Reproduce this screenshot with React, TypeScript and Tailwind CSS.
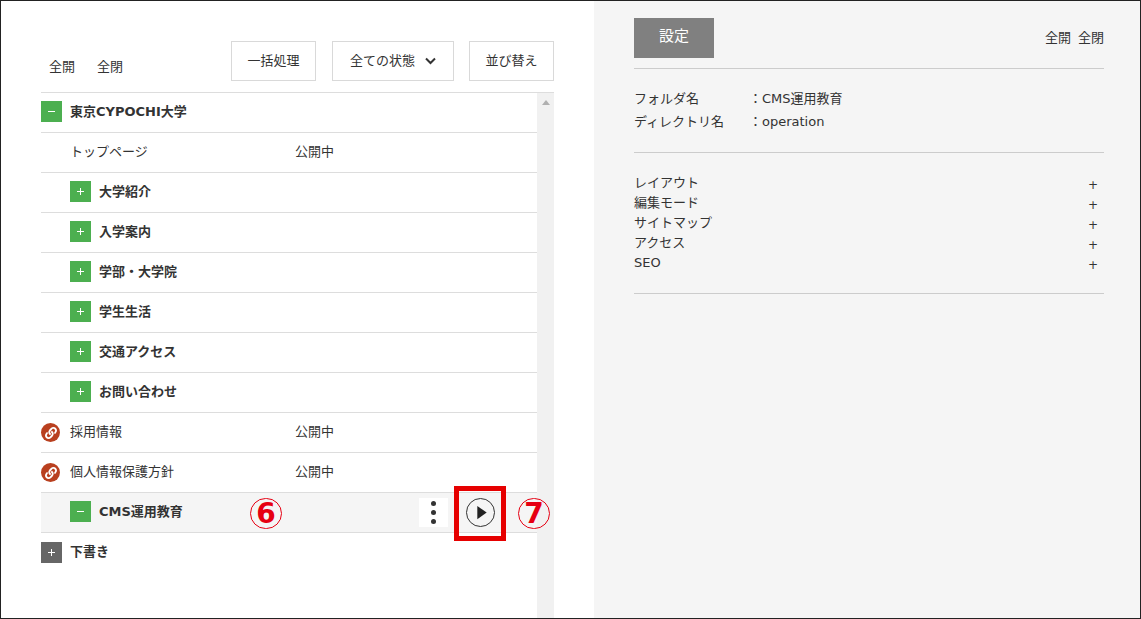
import React from "react";
import { FaLink } from "react-icons/fa";

const font = "font-['DejaVu_Sans','Noto_Sans_CJK_JP',sans-serif]";

const Toggle = ({ open, gray }: { open?: boolean; gray?: boolean }) => (
  <span
    className={`flex h-[21px] w-[21px] shrink-0 items-center justify-center text-white ${gray ? "bg-[#666666]" : "bg-[#4caf50]"}`}
  >
    <svg width="9" height="9" viewBox="0 0 9 9" fill="none" stroke="currentColor" strokeWidth="1">
      <path d="M1 4.5h7" />
      {!open && <path d="M4.5 1v7" />}
    </svg>
  </span>
);

const LinkBadge = () => (
  <span className="mt-[2px] flex h-[19px] w-[19px] shrink-0 items-center justify-center rounded-full bg-[#b9401f] text-white">
    <FaLink size={12} />
  </span>
);

const subFolders = ["大学紹介", "入学案内", "学部・大学院", "学生生活", "交通アクセス", "お問い合わせ"];
const menus = ["レイアウト", "編集モード", "サイトマップ", "アクセス", "SEO"];

const Row = ({ children, last, className = "" }: { children: React.ReactNode; last?: boolean; className?: string }) => (
  <div className={`flex h-10 items-center pb-[2px] ${last ? "" : "border-b border-[#dddddd]"} ${className}`}>{children}</div>
);

const ToolButton = ({ children, className = "" }: { children: React.ReactNode; className?: string }) => (
  <div className={`flex h-10 items-center justify-center border border-[#d9d9d9] bg-white text-[13px] text-[#333] ${className}`}>
    {children}
  </div>
);

export default function App() {
  return (
    <div className={`flex h-[619px] w-[1141px] overflow-hidden border border-[#222222] bg-white text-[13px] text-[#333333] ${font}`}>
      {/* tree side */}
      <div className="flex w-[593px] shrink-0 flex-col pl-10 pr-10">
        <div className="flex h-[91px] shrink-0 items-end justify-between pb-[11px]">
          <div className="mb-1 flex gap-[22px] pl-2 leading-5">
            <span>全開</span>
            <span>全閉</span>
          </div>
          <div className="flex gap-4">
            <ToolButton className="w-[85px]">一括処理</ToolButton>
            <ToolButton className="w-[122px] gap-[10px]">
              全ての状態
              <svg width="11" height="8" viewBox="0 0 11 8" fill="none" stroke="#333" strokeWidth="2">
                <path d="M1 1.5l4.5 4.5 4.5-4.5" />
              </svg>
            </ToolButton>
            <ToolButton className="ml-[-1px] w-[85px]">並び替え</ToolButton>
          </div>
        </div>

        <div className="flex min-h-0 flex-1 border-t border-[#dddddd]">
          <div className="w-[496px]">
            <Row>
              <Toggle open />
              <span className="ml-2 font-bold">東京CYPOCHI大学</span>
            </Row>
            <Row>
              <span className="ml-[29px] w-[225px]">トップページ</span>
              <span>公開中</span>
            </Row>
            {subFolders.map((name) => (
              <Row key={name} className="pl-[29px]">
                <Toggle />
                <span className="ml-2 font-bold">{name}</span>
              </Row>
            ))}
            <Row>
              <LinkBadge />
              <span className="ml-[10px] w-[225px]">採用情報</span>
              <span>公開中</span>
            </Row>
            <Row>
              <LinkBadge />
              <span className="ml-[10px] w-[225px]">個人情報保護方針</span>
              <span>公開中</span>
            </Row>
            <Row className="relative bg-[#f5f5f5] pl-[29px]">
              <Toggle open />
              <span className="ml-2 font-bold">CMS運用教育</span>
              <span className="ml-auto mr-[89px] mt-[2px] flex h-[29px] w-[29px] flex-col items-center justify-center gap-1 bg-white">
                <i className="h-[5px] w-[5px] rounded-full bg-[#333]" />
                <i className="h-[5px] w-[5px] rounded-full bg-[#333]" />
                <i className="h-[5px] w-[5px] rounded-full bg-[#333]" />
              </span>
              <svg className="absolute left-[424px] top-[4px]" width="31" height="31" viewBox="0 0 31 31">
                <circle cx="15.5" cy="15.5" r="14" fill="none" stroke="#333" strokeWidth="1" />
                <path d="M12.3 9l9.4 6.6-9.4 6.7z" fill="#222" />
              </svg>
              {/* annotations */}
              <span className="absolute left-[209px] top-[5px] flex h-[31px] w-[32px] items-center justify-center rounded-full border border-[#e60012] text-[28px] leading-none font-bold text-[#e60012]">
                6
              </span>
              <span className="absolute left-[477px] top-[5px] flex h-[31px] w-[32px] items-center justify-center rounded-full border border-[#e60012] text-[28px] leading-none font-bold text-[#e60012]">
                7
              </span>
              <span className="absolute left-[413px] top-[-7px] h-[55px] w-[52px] border-[5px] border-[#e60000]" />
            </Row>
            <Row last>
              <Toggle gray />
              <span className="ml-2 font-bold">下書き</span>
            </Row>
          </div>
          <div className="flex w-[17px] justify-center bg-[#f1f1f1] pt-[7px]">
            <span className="h-0 w-0 border-x-[4px] border-b-[5px] border-x-transparent border-b-[#b0b0b0]" />
          </div>
        </div>
      </div>

      {/* settings side */}
      <div className="flex-1 bg-[#f5f5f5] pl-10 pr-[36px] pt-[17px]">
        <div className="flex items-center justify-between border-b border-[#cccccc] pb-[10px]">
          <div className="flex h-10 w-20 items-center justify-center bg-[#808080] pb-[3px] text-[15px] text-white">設定</div>
          <div className="flex gap-[7px] pb-[1px]">
            <span>全開</span>
            <span>全閉</span>
          </div>
        </div>
        <div className="border-b border-[#cccccc] pb-[19px] pt-[18px]">
          <div className="flex h-[23px] items-center">
            <span className="w-[115px]">フォルダ名</span>
            <span>：CMS運用教育</span>
          </div>
          <div className="flex h-[23px] items-center">
            <span className="w-[115px]">ディレクトリ名</span>
            <span>：operation</span>
          </div>
        </div>
        <div className="border-b border-[#cccccc] pb-5 pt-5">
          {menus.map((m) => (
            <div key={m} className="flex h-5 items-center justify-between pr-[6px]">
              <span>{m}</span>
              <span className="mt-1 text-[12px]">+</span>
            </div>
          ))}
        </div>
      </div>
    </div>
  );
}
